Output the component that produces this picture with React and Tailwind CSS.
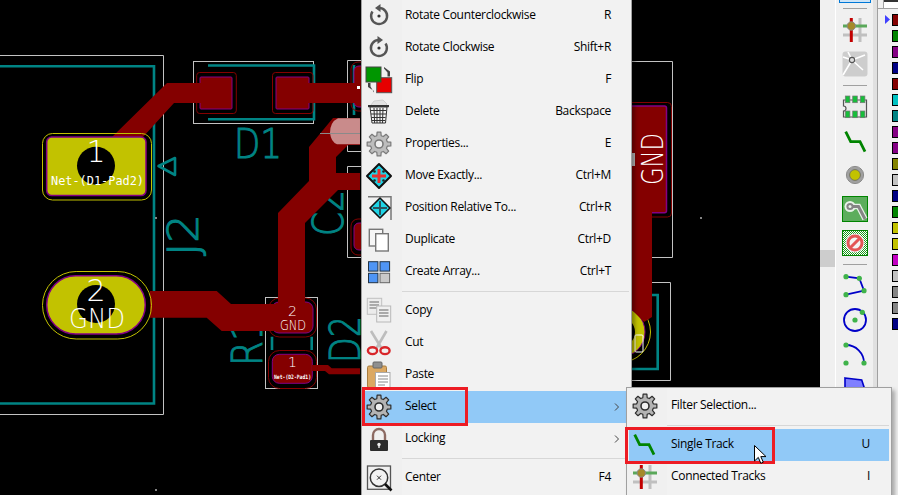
import React from "react";

const RED = "#840000", PUR = "#840084", TEAL = "#008484", YEL = "#c2c200", WH = "#c2c2c2";

function gearPath(cx, cy, ro, ri, teeth) {
  const pts = [];
  const step = (Math.PI * 2) / teeth;
  for (let i = 0; i < teeth; i++) {
    const a = i * step - Math.PI / 2;
    const w = step * 0.2;
    [[ri, a - step * 0.33], [ro, a - w], [ro, a + w], [ri, a + step * 0.33]].forEach(([r, t]) => {
      pts.push(`${(cx + r * Math.cos(t)).toFixed(2)} ${(cy + r * Math.sin(t)).toFixed(2)}`);
    });
  }
  return "M" + pts.join("L") + "Z";
}

const S = ({ children, size = 28 }) => (
  <svg width={size} height={size} viewBox={`0 0 ${size} ${size}`} className="block shrink-0">{children}</svg>
);

const Gear = ({ fill = "#bdbdbd", stroke = "#7a7a7a" }) => (
  <S>
    <path d={gearPath(14, 14, 12, 8.6, 8)} fill={fill} stroke={stroke} strokeWidth="1.2" strokeLinejoin="round" />
    <circle cx="14" cy="14" r="4" fill="#f0f0f0" stroke={stroke} strokeWidth="1.6" />
  </S>
);
const GearDark = () => <Gear fill="#b4b4b4" stroke="#2e2e2e" />;

const RotCCW = () => (
  <S>
    <path d="M14 6A8 8 0 1 1 7.5 9.5" fill="none" stroke="#555" strokeWidth="2.4" />
    <path d="M10 6L15.5 2V10Z" fill="#555" />
    <circle cx="14" cy="14" r="1.6" fill="#333" />
  </S>
);
const RotCW = () => (
  <S>
    <path d="M14 6A8 8 0 1 0 20.5 9.5" fill="none" stroke="#555" strokeWidth="2.4" />
    <path d="M18 6L12.5 2V10Z" fill="#555" />
    <circle cx="14" cy="14" r="1.6" fill="#333" />
  </S>
);
const Flip = () => (
  <S>
    <rect x="11.7" y="11.7" width="15" height="15" fill="#e60000" stroke="#555" />
    <rect x="1" y="1" width="15" height="15" fill="#009600" stroke="#444" />
    <path d="M19 2.5V1L25 5.5V10.5H22.5V6.5Z" fill="#444" />
    <path d="M9 26.5V25L3 21V17H5.5V20.5Z" fill="#444" />
  </S>
);
const Trash = () => (
  <S>
    <path d="M6 7L9 3L18 2L22 6L20 8H8Z" fill="#e2e2e2" stroke="#c4c4c4" strokeWidth=".7" />
    <rect x="3" y="7" width="21" height="2.2" fill="#333" />
    <path d="M5 9H22L20.5 25H7Z" fill="#f4f4f4" stroke="#333" />
    <path d="M9 10L9.6 25M12 10V25M15 10V25M18 10L17.5 25M6 12.5H21M6 16H21M6.5 19.5H20.5M7 22.5H20" stroke="#333" strokeWidth="1" />
  </S>
);
const Move = () => (
  <S>
    <path d="M14 2L26 14L14 26L2 14Z" fill="#1fd4e6" stroke="#111" strokeWidth="2" strokeLinejoin="round" />
    <circle cx="9.5" cy="9.5" r="1.3" fill="#222" /><circle cx="18.5" cy="9.5" r="1.3" fill="#222" />
    <circle cx="9.5" cy="18.5" r="1.3" fill="#222" /><circle cx="18.5" cy="18.5" r="1.3" fill="#222" />
    <path d="M14 7V21M7 14H21" stroke="#e8302f" strokeWidth="3" />
  </S>
);
const Position = () => (
  <S>
    <path d="M3 2.7H26V26" fill="none" stroke="#777" strokeWidth="1.5" />
    <path d="M15 4L25 14L15 24L5 14Z" fill="#1fd4e6" stroke="#111" strokeWidth="1.6" strokeLinejoin="round" />
    <path d="M15 7V21M8 14H22" stroke="#2c5560" strokeWidth="2" />
  </S>
);
const Dup = () => (
  <S>
    <rect x="4.3" y="3.3" width="13.4" height="16.7" fill="#f6f6f6" stroke="#777" strokeWidth="1.4" />
    <rect x="10.7" y="7.7" width="12.6" height="17.3" fill="#fff" stroke="#777" strokeWidth="1.4" />
  </S>
);
const Arr = () => (
  <S>
    <rect x="3.5" y="3.7" width="9.4" height="9.4" fill="#4f95f5" stroke="#234" />
    <rect x="15" y="3.7" width="9.6" height="9.4" fill="#4f95f5" stroke="#234" />
    <rect x="3.5" y="15.3" width="9.4" height="9.4" fill="#4f95f5" stroke="#234" />
    <rect x="15" y="15.3" width="9.6" height="9.4" fill="#c9c9c9" stroke="#666" />
  </S>
);
const Copy = () => (
  <S>
    <rect x="2.3" y="1.3" width="14.4" height="16" fill="#ececec" stroke="#c0c0c0" />
    <path d="M4.5 5H14M4.5 8H14M4.5 11H14" stroke="#aaa" strokeWidth="2" />
    <rect x="11.7" y="9" width="14" height="16" fill="#f0f0f0" stroke="#b8b8b8" />
    <path d="M14 13H23.5M14 16H23.5M14 19H23.5" stroke="#aaa" strokeWidth="2" />
  </S>
);
const Cut = () => (
  <S>
    <path d="M6 2L17 20M21.5 2L11 20" stroke="#bdbdbd" strokeWidth="2.6" />
    <ellipse cx="7.5" cy="21.7" rx="4.6" ry="3.4" fill="none" stroke="#d8262a" strokeWidth="2.4" />
    <ellipse cx="20" cy="21.7" rx="4.6" ry="3.4" fill="none" stroke="#d8262a" strokeWidth="2.4" />
  </S>
);
const Paste = () => (
  <S>
    <rect x="2.5" y="5" width="19" height="21.5" rx="1.5" fill="#dba862" stroke="#a87c3e" />
    <rect x="8" y="1" width="9" height="6" rx="1" fill="#8f8f8f" stroke="#666" />
    <rect x="10.5" y="11.5" width="14.5" height="15.5" fill="#fff" stroke="#aaa" />
    <path d="M13 15H23M13 18H23M13 21H23M13 24H20" stroke="#888" />
  </S>
);
const Lock = () => (
  <S>
    <path d="M8 16V10A6 6 0 0 1 20 10V16" fill="none" stroke="#8c6a62" strokeWidth="2.4" />
    <rect x="5" y="15" width="18" height="11" rx="1" fill="#2b2b2b" />
    <circle cx="14" cy="19.5" r="1.7" fill="#eee" />
    <rect x="13.3" y="19.5" width="1.4" height="3.5" fill="#eee" />
  </S>
);
const CenterI = () => (
  <S>
    <rect x="2.5" y="2" width="23" height="23.3" fill="none" stroke="#555" strokeWidth="1.3" />
    <circle cx="14" cy="13.7" r="8.7" fill="#f2f2f2" stroke="#333" strokeWidth="1.5" />
    <path d="M12 11.7L16 15.7M16 11.7L12 15.7" stroke="#333" />
    <path d="M20 20L26.5 26.5" stroke="#111" strokeWidth="2.6" />
  </S>
);
const TrackI = ({ size = 26 }) => (
  <S size={size}>
    <path d="M3.7 3.7L8.7 13.7H18L23 23.7" fill="none" stroke="#008400" strokeWidth="2.8" />
  </S>
);
const Via = () => (
  <S size={26}>
    <path d="M18 1V25M1 18H25" stroke="#c0c0c0" strokeWidth="3" />
    <path d="M1 9H25" stroke="#5aa85a" strokeWidth="3" />
    <path d="M9.3 1V25" stroke="#c20000" strokeWidth="3" />
    <circle cx="9.3" cy="9" r="4.2" fill="#a58a2a" stroke="#8a8a8a" />
  </S>
);
const Rats = () => (
  <S size={26}>
    <rect x=".5" y=".5" width="25" height="25" rx="3" fill="#cdcdcd" />
    <path d="M10 9L1 24M10 9L21 19M10 9L23 4M10 9L6 1M10 9L1 6" stroke="#fff" strokeWidth="1.6" />
    <circle cx="10" cy="9" r="2.6" fill="#ddd" stroke="#555" strokeWidth="1.1" />
  </S>
);
const FP = () => (
  <S size={26}>
    <path d="M1.5 6H24.5V23H1.5V17A2.5 2.5 0 0 0 1.5 12Z" fill="#ececec" stroke="#555" strokeWidth="1.2" />
    {[3.3, 10.7, 18.3].map((x) => (
      <React.Fragment key={x}>
        <rect x={x} y="2" width="4.6" height="6.7" fill="#17bd3a" stroke="#777" strokeWidth=".7" />
        <rect x={x} y="17" width="4.6" height="6.7" fill="#17bd3a" stroke="#777" strokeWidth=".7" />
      </React.Fragment>
    ))}
  </S>
);
const ViaT = () => (
  <S size={26}>
    <circle cx="13" cy="13" r="8.6" fill="#a0a0a0" stroke="#8c8c8c" />
    <circle cx="13" cy="13" r="5.4" fill={YEL} stroke="#666" strokeWidth=".8" />
  </S>
);
const Route = () => (
  <S size={26}>
    <rect x=".5" y=".5" width="25" height="25" fill="#5cad5c" stroke="#008400" />
    <path d="M8 10.5H16.5L23 23" fill="none" stroke="#e8f2e8" strokeWidth="5.5" />
    <circle cx="8" cy="10.5" r="5.5" fill="#e8f2e8" />
    <path d="M8 10.5H16.5L23 23" fill="none" stroke="#858585" strokeWidth="3" />
    <circle cx="8" cy="10.5" r="3.6" fill="#858585" />
    <circle cx="8" cy="10.5" r="1.5" fill="#e8f2e8" />
  </S>
);
const Keep = () => (
  <S size={26}>
    <defs>
      <pattern id="hatch" width="2" height="2" patternUnits="userSpaceOnUse">
        <rect width="2" height="2" fill="#fff" />
        <rect width="1" height="1" fill="#199a19" />
        <rect x="1" y="1" width="1" height="1" fill="#199a19" />
      </pattern>
    </defs>
    <rect x=".5" y=".5" width="25" height="25" fill="url(#hatch)" stroke="#008400" />
    <circle cx="13" cy="13" r="9.5" fill="#f0f0f0" />
    <circle cx="13" cy="13" r="7" fill="#f4f4f4" stroke="#e35656" strokeWidth="3" />
    <path d="M8 18L18 8" stroke="#e35656" strokeWidth="3" />
  </S>
);
const dot = (x, y) => <circle key={`${x}-${y}`} cx={x} cy={y} r="2.6" fill="#3fb34a" />;
const Poly = () => (
  <S size={26}>
    <path d="M4 3.7L17.3 5.3L22 17.7L4 21.7" fill="none" stroke="#0000c8" strokeWidth="1.8" />
    {[[4, 3.7], [17.3, 5.3], [22, 17.7], [4, 21.7]].map(([x, y]) => dot(x, y))}
  </S>
);
const Circ = () => (
  <S size={26}>
    <circle cx="13" cy="13" r="11" fill="none" stroke="#0000c8" strokeWidth="1.8" />
    {dot(13, 13)}{dot(20.3, 5.3)}
  </S>
);
const Arc = () => (
  <S size={26}>
    <path d="M4 4A18 18 0 0 1 22 22" fill="none" stroke="#0000c8" strokeWidth="1.8" />
    {dot(4, 4)}{dot(22, 22)}{dot(4, 22)}
  </S>
);
const Zone = () => (
  <S size={26}>
    <path d="M3 3L19.7 5L23 15L18 25H3Z" fill="#8080ff" stroke="#0000c8" strokeWidth="1.6" />
  </S>
);

const rows = [
  ["Rotate Counterclockwise", "R", RotCCW], ["Rotate Clockwise", "Shift+R", RotCW], ["Flip", "F", Flip],
  ["Delete", "Backspace", Trash], ["Properties...", "E", Gear], ["Move Exactly...", "Ctrl+M", Move],
  ["Position Relative To...", "Ctrl+R", Position], ["Duplicate", "Ctrl+D", Dup], ["Create Array...", "Ctrl+T", Arr],
  "sep", ["Copy", "", Copy], ["Cut", "", Cut], ["Paste", "", Paste],
  ["Select", ">", GearDark, true], ["Locking", ">", Lock],
  "sep", ["Center", "F4", CenterI],
];

const Chevron = () => (
  <svg width="6" height="8" viewBox="0 0 6 8" className="ml-auto -mr-[9px] shrink-0">
    <path d="M1 .5L4.5 4L1 7.5" fill="none" stroke="#444" strokeWidth="1" />
  </svg>
);

function Row({ label, sc, Icon, active }) {
  return (
    <div className={`flex h-[32px] items-center pr-[19px] ${active ? "bg-[#91c9f7]" : ""}`}>
      <div className="flex w-[38px] shrink-0 justify-center pr-[6px]"><Icon /></div>
      <span className="-translate-y-px pl-[4px] tracking-[-0.32px]">{label}</span>
      {sc === ">" ? <Chevron /> : <span className="ml-auto -translate-y-px tracking-[-0.32px]">{sc}</span>}
    </div>
  );
}

const Pad = ({ x, y, w, h, r = 1, ox, oy, ow, oh, or = 3 }) => (
  <>
    <rect x={ox} y={oy} width={ow} height={oh} rx={or} fill="none" stroke={RED} />
    <rect x={x} y={y} width={w} height={h} rx={r} fill={RED} stroke={PUR} strokeWidth="1" />
  </>
);

const strokeFont = { fontFamily: "'DejaVu Sans', sans-serif", fontWeight: 200 };
const mono = { fontFamily: "'DejaVu Sans Mono', monospace" };

function Board() {
  return (
    <svg width="820" height="495" viewBox="0 0 820 495" className="block">
      <rect width="820" height="495" fill="#000" />
      {/* courtyards */}
      <g fill="none" stroke={WH}>
        <path d="M0 55.5H163.5V414.5H0" />
        <rect x="193.5" y="61.5" width="120" height="62" />
        <rect x="265.5" y="297.5" width="52" height="91" />
        <path d="M400 60.5H347.5V151.5H400M400 166.5H347.5V257.5H400" />
        <path d="M600 61.5H672.5V257.5H600M600 282.5H670.5V380.5H600" />
      </g>
      {/* silk */}
      <g fill="none" stroke={TEAL} strokeWidth="2.6">
        <path d="M0 66.3H154V403.5H0" />
        <path d="M208 65.5H314V119.3H208" />
        <path d="M272 336.7V350M311.7 336.7V350" />
        <path d="M354 65V115" />
        <path d="M600 295H657.7V369H600" />
        <path d="M158.5 166L175 158V175Z" strokeLinejoin="round" />
      </g>
      <g fill={TEAL} stroke={TEAL} strokeWidth="1" style={strokeFont}>
        <text x="234" y="158" fontSize="41" textLength="48" lengthAdjust="spacingAndGlyphs">D1</text>
        <text transform="translate(198 256) rotate(-90)" fontSize="43" textLength="42" lengthAdjust="spacingAndGlyphs">J2</text>
        <text transform="translate(343 236) rotate(-90)" fontSize="43" textLength="46" lengthAdjust="spacingAndGlyphs">C2</text>
        <text transform="translate(262 366) rotate(-90)" fontSize="43" textLength="48" lengthAdjust="spacingAndGlyphs">R1</text>
        <text transform="translate(360 363) rotate(-90)" fontSize="43" textLength="47" lengthAdjust="spacingAndGlyphs">D2</text>
      </g>
      {/* copper pads */}
      <Pad x={200} y={77} w={32} h={32} ox={196.7} oy={72.5} ow={39.6} oh={41} />
      <Pad x={276} y={77} w={33} h={32} ox={272.5} oy={72.5} ow={40.5} oh={41} />
      <Pad x={354} y={66} w={30} h={41} r={5} ox={351} oy={62} ow={36} oh={49} or={7} />
      <Pad x={354} y={223} w={30} h={27} r={5} ox={351} oy={219} ow={36} oh={36} or={7} />
      <Pad x={272} y={302} w={41} h={31} r={7} ox={268.5} oy={298} ow={48} oh={39} or={11} />
      <Pad x={272.3} y={354.3} w={40} h={29} r={7} ox={268.5} oy={350.5} ow={48} oh={38} or={11} />
      <rect x="600" y="106" width="66.5" height="106.7" rx="2" fill={RED} stroke={PUR} strokeWidth="1.5" />
      <rect x="600" y="102.5" width="71.5" height="114.5" rx="4" fill="none" stroke={RED} />
      {/* tracks */}
      <g fill={RED}>
        <path d="M112 137L167 83H216V103H174L143 137Z" />
        <path d="M292 83H360V103H292Z" />
        <path d="M360 118H333L309 147V181L278 213V322H305V223L338 190H360V173H336V157L348 145H360Z" />
        <path d="M150 291H216.7L231 304H290V331H221.7L206.7 317.7H150Z" />
        <path d="M312 365H328L331.7 368.3H360V374.3H329L325 371H312Z" />
      </g>
      <path d="M360 118.3H338Q330 122 330 133Q331 142 337 144.3H360Z" fill="#c98b8b" />
      <path d="M320 133.5H360" stroke="#8a8a8a" />
      <rect x="357" y="86" width="3" height="3" fill="#fff" />
      {/* big pads */}
      <rect x="42.5" y="133.5" width="109" height="66.5" rx="10" fill="none" stroke={YEL} />
      <rect x="46.7" y="137" width="99.3" height="58.6" rx="5" fill={YEL} stroke={PUR} strokeWidth="1.5" />
      <circle cx="96" cy="165.7" r="19" fill="#000" />
      <rect x="42.5" y="271.5" width="109" height="67.5" rx="33.7" fill="none" stroke={YEL} />
      <rect x="46.7" y="275.7" width="98.6" height="58.3" rx="29" fill={YEL} stroke={PUR} strokeWidth="1.5" />
      <circle cx="96" cy="304" r="19" fill="#000" />
      {/* right pads */}
      <circle cx="620" cy="332" r="30.5" fill="none" stroke={YEL} />
      <circle cx="620" cy="332" r="25" fill={YEL} stroke={PUR} />
      <circle cx="620" cy="332" r="15" fill="#000" />
      <path d="M632 212H652V317L644 322L632 310Z" fill={RED} />
      <rect x="635" y="335" width="8" height="17" rx="1" fill="none" stroke="#fff" />
      <rect x="632" y="153" width="3" height="13" fill="#bcbcbc" />
      {/* pad text */}
      <g fill="#fff" style={strokeFont}>
        <text x="96" y="162" fontSize="30" textAnchor="middle">1</text>
        <text x="96" y="301" fontSize="30" textAnchor="middle">2</text>
        <text x="97" y="328" fontSize="27" textAnchor="middle" textLength="56" lengthAdjust="spacingAndGlyphs">GND</text>
        <text x="292.5" y="316" fontSize="14" textAnchor="middle">2</text>
        <text x="293" y="330" fontSize="14" textAnchor="middle" textLength="26" lengthAdjust="spacingAndGlyphs">GND</text>
        <text x="292.5" y="367" fontSize="14" textAnchor="middle">1</text>
        <text transform="translate(663 185) rotate(-90)" fontSize="31" textLength="52" lengthAdjust="spacingAndGlyphs">GND</text>
      </g>
      <g fill="#fff" style={mono}>
        <text x="51" y="185" fontSize="13" textLength="93" lengthAdjust="spacingAndGlyphs">Net-(D1-Pad2)</text>
        <text x="274" y="379" fontSize="6" fontWeight="700" textLength="37" lengthAdjust="spacingAndGlyphs">Net-(D2-Pad1)</text>
      </g>
      <rect x="155" y="217" width="2" height="2" fill="#848484" />
      <rect x="155" y="489" width="2" height="2" fill="#848484" />
      <rect x="700" y="217" width="2" height="2" fill="#848484" />
    </svg>
  );
}

const tools = [Via, Rats, "sep", FP, TrackI, ViaT, Route, Keep, "sep", Poly, Circ, Arc, Zone];
const swatches = ["#840000", "#008400", "#840084", "#000084", "#840000", "#00c2c2", "#008484", "#840084", "#840084", "#848400", "#c2c2c2", "#000084", "#008400", "#c2c200", "#c2c200", "#c200c2", "#c2c2c2", "#848484", "#848484", "#000084"];
const SingleIcon = () => <TrackI size={28} />;

export default function App() {
  return (
    <div className="relative flex h-[495px] w-[898px] overflow-hidden bg-[#f0f0f0] font-['Open_Sans','Noto_Sans',sans-serif] text-[12px] text-black">
      <div className="h-full w-[820px] shrink-0"><Board /></div>

      {/* canvas scrollbar */}
      <div className="h-full w-[16px] shrink-0 border-r border-white pt-[250px]">
        <div className="h-[17px] w-[15px] bg-[#cdcdcd]" />
      </div>

      {/* tool bar */}
      <div className="flex h-full w-[37px] shrink-0 flex-col items-center">
        <div className="h-[3px] w-[32px] shrink-0 border-x border-b border-[#0078d7] bg-[#cce4f7]" />
        <div className="h-[1px] shrink-0" />
        <div className="flex h-[9px] w-[24px] shrink-0 items-center"><div className="h-px w-full bg-[#a0a0a0]" /></div>
        {tools.map((T, i) =>
          T === "sep" ? (
            <div key={i} className="flex h-[9px] w-[24px] shrink-0 items-center"><div className="h-px w-full bg-[#a0a0a0]" /></div>
          ) : (
            <div key={i} className="flex h-[34px] shrink-0 items-center justify-center"><T /></div>
          )
        )}
      </div>

      {/* sash */}
      <div className="h-full w-[5px] shrink-0 border-r border-[#a0a0a0] bg-[#e0e0e0]" />

      {/* layers panel */}
      <div className="h-full flex-1">
        <div className="flex h-[9px] border-b border-[#a0a0a0]">
          <div className="h-full w-[6px] border-r border-[#a0a0a0]" />
          <div className="flex-1 border-t-2 border-[#333] bg-white" />
        </div>
        <div className="flex flex-col gap-[1px] pt-[3px]">
          {swatches.map((c, i) => (
            <div key={i} className="flex h-[15px] items-center pl-[7px]">
              <div className="flex w-[7px] justify-start">
                {i === 0 && (
                  <svg width="5" height="9" viewBox="0 0 5 9" className="block"><path d="M0 0L5 4.5L0 9Z" fill="#4040ff" /></svg>
                )}
              </div>
              <div style={{ backgroundColor: c }} className="h-[12px] w-[8px] shrink-0 border border-black" />
            </div>
          ))}
        </div>
      </div>

      {/* main context menu */}
      <div className="absolute left-[361px] top-[-1px] h-[500px] w-[271px] border border-[#a0a0a0] bg-[linear-gradient(to_right,#f0f0f0_40px,#f2f2f2_40px)] px-[1px] shadow-[3px_3px_4px_rgba(0,0,0,0.35)]">
        {rows.map((r, i) =>
          r === "sep" ? (
            <div key={i} className="flex h-[7px] items-center pl-[39px] pr-[1px]"><div className="h-[1px] w-full bg-[#d7d7d7]" /></div>
          ) : (
            <Row key={i} label={r[0]} sc={r[1]} Icon={r[2]} active={r[3]} />
          )
        )}
      </div>

      {/* sub menu */}
      <div className="absolute left-[626px] top-[387px] h-[112px] w-[266px] border border-[#a0a0a0] bg-[linear-gradient(to_right,#f0f0f0_40px,#f2f2f2_40px)] px-[2px] pt-[2px] shadow-[3px_3px_4px_rgba(0,0,0,0.3)]">
        <Row label="Filter Selection..." sc="" Icon={GearDark} />
        <div className="flex h-[7px] items-center pl-[38px]"><div className="h-px w-full bg-[#d7d7d7]" /></div>
        <Row label="Single Track" sc="U" Icon={SingleIcon} active />
        <Row label="Connected Tracks" sc="I" Icon={Via} />
      </div>

      {/* annotation boxes */}
      <div className="absolute left-[362px] top-[387px] h-[39px] w-[106px] border-[3px] border-[#ed1c24]" />
      <div className="absolute left-[625px] top-[427px] h-[37px] w-[150px] border-[3px] border-[#ed1c24]" />

      {/* pointer */}
      <svg width="14" height="20" viewBox="0 0 14 20" className="absolute left-[754px] top-[445px]">
        <path d="M.5 .5V16L4.3 12.4L6.8 18.3L9.3 17.2L6.8 11.6H12Z" fill="#fff" stroke="#000" strokeWidth="1" />
      </svg>
    </div>
  );
}
